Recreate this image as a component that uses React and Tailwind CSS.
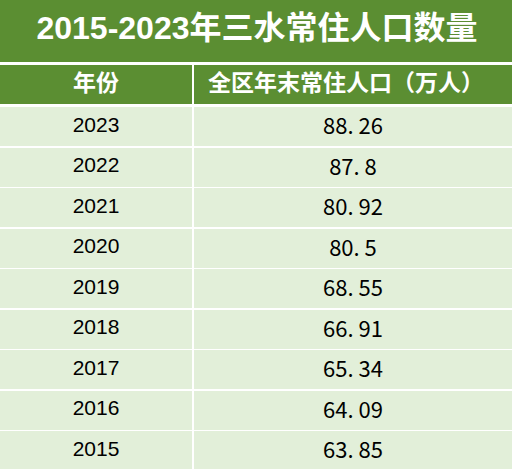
const rows = [
  ["2023", "88. 26"],
  ["2022", "87. 8"],
  ["2021", "80. 92"],
  ["2020", "80. 5"],
  ["2019", "68. 55"],
  ["2018", "66. 91"],
  ["2017", "65. 34"],
  ["2016", "64. 09"],
  ["2015", "63. 85"],
];

const cjk = { fontFamily: '"Liberation Sans", "Noto Sans CJK SC", sans-serif' };
const num = { fontFamily: '"Noto Sans CJK SC", sans-serif' };

export default function App() {
  return (
    <div className="w-[512px] h-[469px] overflow-hidden bg-white" style={cjk}>
      <div className="h-[62px] bg-[#5b8e32] flex items-center justify-center pb-[6px] pl-[2px]">
        <h1 className="text-[32px] font-bold text-white leading-none">
          2015-2023年三水常住人口数量
        </h1>
      </div>

      <div className="mt-[3px] grid grid-cols-[192px_1fr] gap-x-[2px] h-[39px]">
        <div className="bg-[#5b8e32] flex items-center justify-center text-white font-bold text-[23px] pb-[2px]">
          年份
        </div>
        <div className="bg-[#5b8e32] flex items-center justify-center text-white font-bold text-[23px] pr-[14px] pb-[2px]">
          全区年末常住人口（万人）
        </div>
      </div>

      <div className="mt-[3px] flex flex-col gap-y-[1.5px]">
        {rows.map(([year, value]) => (
          <div key={year} className="grid grid-cols-[192px_1fr] gap-x-[2px] h-[39px]">
            <div className="bg-[#e2efd9] flex items-center justify-center text-[21px] text-black pb-[4px]">
              {year}
            </div>
            <div
              className="bg-[#e2efd9] flex items-center justify-center text-[22px] text-black pb-[4px]"
              style={num}
            >
              {value}
            </div>
          </div>
        ))}
      </div>
    </div>
  );
}
